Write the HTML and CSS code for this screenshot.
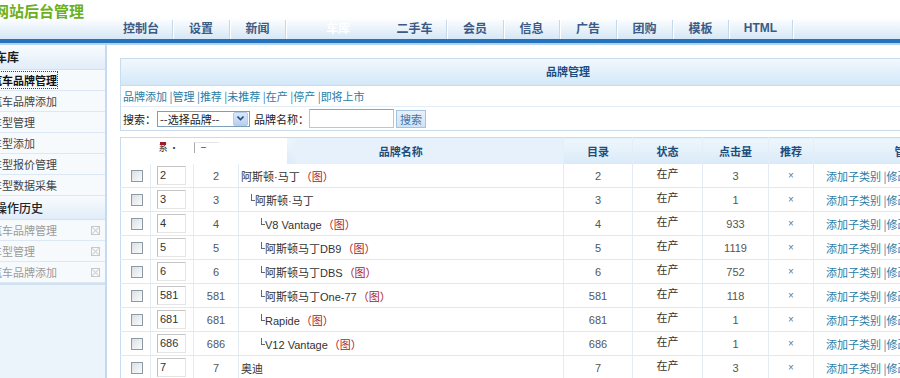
FILE: index.html
```html
<!DOCTYPE html>
<html lang="zh-CN">
<head>
    <meta charset="UTF-8">
    <title>网站后台管理</title>
    <link rel="stylesheet" href="styles.css">
</head>
<body>
    <header class="top">
        <div class="logo">网站后台管理</div>
        <ul class="nav">
            <li class="w63"><a href="#">控制台</a></li>
            <li class="w57"><a href="#">设置</a></li>
            <li class="w56"><a href="#">新闻</a></li>
            <li class="active"><a href="#">车库</a></li>
            <li class="w64"><a href="#">二手车</a></li>
            <li class="w57"><a href="#">会员</a></li>
            <li class="w56"><a href="#">信息</a></li>
            <li class="w57"><a href="#">广告</a></li>
            <li class="w56"><a href="#">团购</a></li>
            <li class="w56"><a href="#">模板</a></li>
            <li class="w64 latin"><a href="#">HTML</a></li>
        </ul>
    </header>
    <div class="top-line"></div>

    <div class="layout">
        <aside class="side">
            <div class="side-title">车库</div>
            <ul class="side-menu">
                <li class="current"><a href="#">汽车品牌管理</a></li>
                <li><a href="#">汽车品牌添加</a></li>
                <li><a href="#">车型管理</a></li>
                <li><a href="#">车型添加</a></li>
                <li><a href="#">车型报价管理</a></li>
                <li><a href="#">车型数据采集</a></li>
            </ul>
            <div class="side-title history-title">操作历史</div>
            <ul class="side-menu history">
                <li><a href="#">汽车品牌管理</a><span class="close"></span></li>
                <li><a href="#">车型管理</a><span class="close"></span></li>
                <li><a href="#">汽车品牌添加</a><span class="close"></span></li>
            </ul>
        </aside>

        <main class="main">
            <div class="panel">
                <div class="panel-title">品牌管理</div>
                <div class="panel-links">
                    <a href="#">品牌添加</a> |<a href="#">管理</a> |<a href="#">推荐</a> |<a href="#">未推荐</a> |<a href="#">在产</a> |<a href="#">停产</a> |<a href="#">即将上市</a>
                </div>
                <form class="panel-search">
                    <span>搜索：</span>
                    <span class="select">
                        <span class="select-text">--选择品牌--</span>
                        <span class="select-arrow">
                            <svg width="7" height="5" viewBox="0 0 7 5"><path d="M0.5 0.5 L3.5 3.5 L6.5 0.5" fill="none" stroke="#2d4f8a" stroke-width="1.6"/></svg>
                        </span>
                    </span>
                    <span class="label">品牌名称：</span>
                    <input type="text" class="keyword">
                    <button type="button" class="search-btn">搜索</button>
                </form>
            </div>

            <table class="list">
                <colgroup>
                    <col style="width:30px"><col style="width:43px"><col style="width:45px"><col style="width:325px">
                    <col style="width:69px"><col style="width:70px"><col style="width:66px"><col style="width:45px"><col style="width:184px">
                </colgroup>
                <thead>
                    <tr>
                        <th class="blank"></th>
                        <th class="blank"><span class="ghost"><i></i>系 ·</span></th>
                        <th class="blank"><span class="ghost-box">–</span></th>
                        <th class="name-head">品牌名称</th>
                        <th>目录</th>
                        <th>状态</th>
                        <th>点击量</th>
                        <th>推荐</th>
                        <th>管理</th>
                    </tr>
                </thead>
                <tbody>
                    <tr>
                        <td><span class="check"></span></td>
                        <td><span class="sort">2</span></td>
                        <td class="num">2</td>
                        <td class="name lv0">阿斯顿·马丁<span class="pic">（图）</span></td>
                        <td class="num">2</td>
                        <td class="state">在产</td>
                        <td class="num">3</td>
                        <td class="rec">×</td>
                        <td class="ops"><a href="#">添加子类别</a> |<a href="#">修改</a> |<a href="#">删除</a></td>
                    </tr>
                    <tr>
                        <td><span class="check"></span></td>
                        <td><span class="sort">3</span></td>
                        <td class="num">3</td>
                        <td class="name lv1"><span class="tree"></span>阿斯顿·马丁</td>
                        <td class="num">3</td>
                        <td class="state">在产</td>
                        <td class="num">1</td>
                        <td class="rec">×</td>
                        <td class="ops"><a href="#">添加子类别</a> |<a href="#">修改</a> |<a href="#">删除</a></td>
                    </tr>
                    <tr>
                        <td><span class="check"></span></td>
                        <td><span class="sort">4</span></td>
                        <td class="num">4</td>
                        <td class="name lv2"><span class="tree"></span>V8 Vantage<span class="pic">（图）</span></td>
                        <td class="num">4</td>
                        <td class="state">在产</td>
                        <td class="num">933</td>
                        <td class="rec">×</td>
                        <td class="ops"><a href="#">添加子类别</a> |<a href="#">修改</a> |<a href="#">删除</a></td>
                    </tr>
                    <tr>
                        <td><span class="check"></span></td>
                        <td><span class="sort">5</span></td>
                        <td class="num">5</td>
                        <td class="name lv2"><span class="tree"></span>阿斯顿马丁DB9<span class="pic">（图）</span></td>
                        <td class="num">5</td>
                        <td class="state">在产</td>
                        <td class="num">1119</td>
                        <td class="rec">×</td>
                        <td class="ops"><a href="#">添加子类别</a> |<a href="#">修改</a> |<a href="#">删除</a></td>
                    </tr>
                    <tr>
                        <td><span class="check"></span></td>
                        <td><span class="sort">6</span></td>
                        <td class="num">6</td>
                        <td class="name lv2"><span class="tree"></span>阿斯顿马丁DBS<span class="pic">（图）</span></td>
                        <td class="num">6</td>
                        <td class="state">在产</td>
                        <td class="num">752</td>
                        <td class="rec">×</td>
                        <td class="ops"><a href="#">添加子类别</a> |<a href="#">修改</a> |<a href="#">删除</a></td>
                    </tr>
                    <tr>
                        <td><span class="check"></span></td>
                        <td><span class="sort">581</span></td>
                        <td class="num">581</td>
                        <td class="name lv2"><span class="tree"></span>阿斯顿马丁One-77<span class="pic">（图）</span></td>
                        <td class="num">581</td>
                        <td class="state">在产</td>
                        <td class="num">118</td>
                        <td class="rec">×</td>
                        <td class="ops"><a href="#">添加子类别</a> |<a href="#">修改</a> |<a href="#">删除</a></td>
                    </tr>
                    <tr>
                        <td><span class="check"></span></td>
                        <td><span class="sort">681</span></td>
                        <td class="num">681</td>
                        <td class="name lv2"><span class="tree"></span>Rapide<span class="pic">（图）</span></td>
                        <td class="num">681</td>
                        <td class="state">在产</td>
                        <td class="num">1</td>
                        <td class="rec">×</td>
                        <td class="ops"><a href="#">添加子类别</a> |<a href="#">修改</a> |<a href="#">删除</a></td>
                    </tr>
                    <tr>
                        <td><span class="check"></span></td>
                        <td><span class="sort">686</span></td>
                        <td class="num">686</td>
                        <td class="name lv2"><span class="tree"></span>V12 Vantage<span class="pic">（图）</span></td>
                        <td class="num">686</td>
                        <td class="state">在产</td>
                        <td class="num">1</td>
                        <td class="rec">×</td>
                        <td class="ops"><a href="#">添加子类别</a> |<a href="#">修改</a> |<a href="#">删除</a></td>
                    </tr>
                    <tr>
                        <td><span class="check"></span></td>
                        <td><span class="sort">7</span></td>
                        <td class="num">7</td>
                        <td class="name lv0">奥迪</td>
                        <td class="num">7</td>
                        <td class="state">在产</td>
                        <td class="num">3</td>
                        <td class="rec">×</td>
                        <td class="ops"><a href="#">添加子类别</a> |<a href="#">修改</a> |<a href="#">删除</a></td>
                    </tr>
                </tbody>
            </table>
        </main>
    </div>
</body>
</html>
```

FILE: styles.css
```css
:root {
    --link-color: #2a7ca6;
    --head-color: #1d4d7d;
    --line-color: #c9dcee;
    --row-line: #dfe9f2;
    --nav-color: #3b5a84;
    --cjk: "Noto Sans CJK SC", sans-serif;
}

body {
    margin: 0;
    padding: 0;
    width: 900px;
    height: 378px;
    overflow: hidden;
    background: #fff;
    color: #333;
    font-family: "Liberation Sans", "Noto Sans CJK SC", sans-serif;
    font-size: 11px;
}

a {
    text-decoration: none;
    color: inherit;
}

ul {
    list-style: none;
    margin: 0;
    padding: 0;
}

/* header */
.top {
    height: 39px;
    background: linear-gradient(#fff 0, #fff 45%, #d6e7f6 100%);
    overflow: hidden;
}

.logo {
    height: 20px;
    margin-left: -6px;
    line-height: 21px;
    font-size: 15px;
    font-weight: bold;
    color: #6bb01d;
    font-family: var(--cjk);
}

.nav {
    display: flex;
    height: 19px;
    padding-left: 110px;
}

.nav li {
    box-sizing: border-box;
    height: 19px;
    line-height: 16px;
    text-align: center;
    border-right: 1px solid #c4d8eb;
    box-shadow: 1px 0 0 #fff;
    font-size: 12px;
    font-weight: bold;
    color: var(--nav-color);
    font-family: var(--cjk);
}

.nav .w63 { width: 63px; }
.nav .w64 { width: 64px; }
.nav .w57 { width: 57px; }
.nav .w56 { width: 56px; }

.nav .active {
    width: 97px;
    padding-left: 7px;
    border-right: none;
    box-shadow: none;
    color: #fff;
}

.nav .latin {
    font-family: "Liberation Sans", sans-serif;
}

.top-line {
    height: 4px;
    background: #2573bc;
    border-bottom: 2px solid #b6d3ed;
}

.layout {
    display: flex;
    height: 333px;
}

/* sidebar */
.side {
    flex: none;
    width: 107px;
    box-sizing: border-box;
    border-right: 2px solid #c5daee;
    background: #ebf3fb;
    overflow: hidden;
    font-family: var(--cjk);
}

.side-title {
    height: 24px;
    line-height: 24px;
    text-indent: -5px;
    font-size: 12px;
    font-weight: bold;
    color: #1e1e1e;
    background: linear-gradient(#f8fbfe, #e1edf8);
    border-bottom: 1px solid #d2e1f0;
}

.history-title {
    height: 23px;
    line-height: 23px;
    font-weight: 500;
    color: #222;
}

.side-menu li {
    position: relative;
    height: 20px;
    line-height: 20px;
    text-indent: -9px;
    color: #444;
    background: #f7fafd;
    border-bottom: 1px solid #dce8f3;
}

.side-menu .current a {
    font-weight: bold;
    color: #111;
    outline: 1px dotted #444;
}

.history {
    border-bottom: 2px solid #d0e1f1;
}

.history li {
    color: #9a9a9a;
}

.close {
    position: absolute;
    top: 6px;
    left: 91px;
    width: 7px;
    height: 7px;
    border: 1px solid #c8c8c8;
}

.close::before,
.close::after {
    content: "";
    position: absolute;
    left: 3px;
    top: -1px;
    width: 1px;
    height: 9px;
    background: #d0d0d0;
    transform: rotate(45deg);
}

.close::after {
    transform: rotate(-45deg);
}

/* main */
.main {
    flex: 1;
    min-width: 0;
    overflow: hidden;
    padding: 13px 0 0 13px;
}

.panel {
    width: 896px;
    box-sizing: border-box;
    border: 1px solid var(--line-color);
}

.panel-title {
    height: 26px;
    line-height: 26px;
    text-align: center;
    font-weight: bold;
    color: var(--head-color);
    background: linear-gradient(#f1f8fe, #d4e8f8);
    border-bottom: 1px solid var(--line-color);
}

.panel-links {
    height: 20px;
    line-height: 20px;
    padding-left: 2px;
    color: var(--link-color);
    border-bottom: 1px solid #e2edf6;
    font-family: var(--cjk);
}

.panel-search {
    display: flex;
    align-items: center;
    height: 23px;
    margin: 0;
    padding-left: 2px;
    color: #222;
    font-family: var(--cjk);
}

.select {
    display: flex;
    align-items: center;
    box-sizing: border-box;
    width: 93px;
    height: 16px;
    margin-left: 1px;
    border: 1px solid #7f9db9;
    background: #fff;
}

.select-text {
    flex: 1;
    padding-left: 2px;
    line-height: 14px;
    color: #222;
}

.select-arrow {
    display: flex;
    align-items: center;
    justify-content: center;
    width: 13px;
    height: 12px;
    margin-right: 1px;
    border: 1px solid #b5cbe6;
    border-radius: 2px;
    background: linear-gradient(#dbe8f8, #b7d0ef);
}

.label {
    margin-left: 4px;
}

.keyword {
    box-sizing: border-box;
    width: 85px;
    height: 19px;
    margin: 0;
    padding: 0;
    border: 1px solid #c4c4c4;
    border-top-color: #a0a0a0;
}

.search-btn {
    box-sizing: border-box;
    height: 18px;
    margin-left: 2px;
    padding: 0 3px;
    border: 1px solid #a4c3e1;
    background: linear-gradient(#e6f1fb, #cfe3f6);
    color: #4472a6;
    font-family: var(--cjk);
    font-size: 11px;
    line-height: 14px;
}

/* list */
.list {
    width: 877px;
    margin-top: 6px;
    border-collapse: collapse;
    table-layout: fixed;
    border-left: 1px solid var(--line-color);
}

.list th {
    height: 26px;
    padding: 0;
    color: var(--head-color);
    font-weight: bold;
    font-family: var(--cjk);
    background: linear-gradient(#eff7fd, #d9eaf8);
    border-top: 1px solid var(--line-color);
    border-right: 1px solid #e4eef7;
}

.list th.blank {
    background: #fff;
    border-right: none;
    vertical-align: top;
    text-align: left;
}

.list th.name-head {
    background: linear-gradient(#fff, #fff) no-repeat 0 0 / 48px 100%,
                linear-gradient(to right, rgba(255,255,255,0) 48px, #e6f1fb 60px) no-repeat 0 0 / 100% 100%,
                linear-gradient(#eff7fd, #d9eaf8);
}

.ghost {
    position: relative;
    display: inline-block;
    margin: -1px 0 0 8px;
    font-size: 9px;
    line-height: 9px;
    color: #222;
    font-weight: normal;
}

.ghost i {
    position: absolute;
    left: 1px;
    top: -1px;
    width: 6px;
    height: 3px;
    background: #9c1c2a;
}

.ghost-box {
    display: inline-block;
    margin-top: 4px;
    padding-left: 6px;
    width: 18px;
    height: 10px;
    line-height: 6px;
    border-left: 1px solid #aaa;
    border-top: 1px solid #e6e6e6;
    color: #333;
    font-weight: normal;
}

.list td {
    height: 23px;
    padding: 0;
    text-align: center;
    color: #555;
    border-bottom: 1px solid var(--row-line);
    border-right: 1px solid #e3ecf4;
}

.check {
    display: block;
    box-sizing: border-box;
    width: 12px;
    height: 12px;
    margin-left: 10px;
    border: 1px solid #8c9aa6;
    background: linear-gradient(135deg, #dcdfe2, #fbfbfb);
}

.sort {
    display: block;
    box-sizing: border-box;
    width: 29px;
    height: 19px;
    margin-left: 6px;
    padding-left: 2px;
    line-height: 17px;
    text-align: left;
    border: 1px solid #e4e4e4;
    border-left-color: #bdbdbd;
    border-top-color: #c6c6c6;
    color: #333;
    background: #fff;
}

.list td.name {
    text-align: left;
    color: #333;
}

.list td.lv0 { padding-left: 2px; }
.list td.lv1 { padding-left: 12px; }
.list td.lv2 { padding-left: 22px; }

.tree {
    display: inline-block;
    width: 3px;
    height: 6px;
    border-left: 1px solid #666;
    border-bottom: 1px solid #666;
    vertical-align: 4px;
}

.pic {
    color: #a8222b;
    margin-left: 1px;
    font-family: var(--cjk);
}

.list td.state {
    padding-bottom: 5px;
    height: 18px;
    color: #333;
    font-family: var(--cjk);
}

.list td.rec {
    font-size: 10px;
    color: #777;
}

.list td.ops {
    text-align: left;
    padding-left: 12px;
    color: var(--link-color);
    font-family: var(--cjk);
}
```
